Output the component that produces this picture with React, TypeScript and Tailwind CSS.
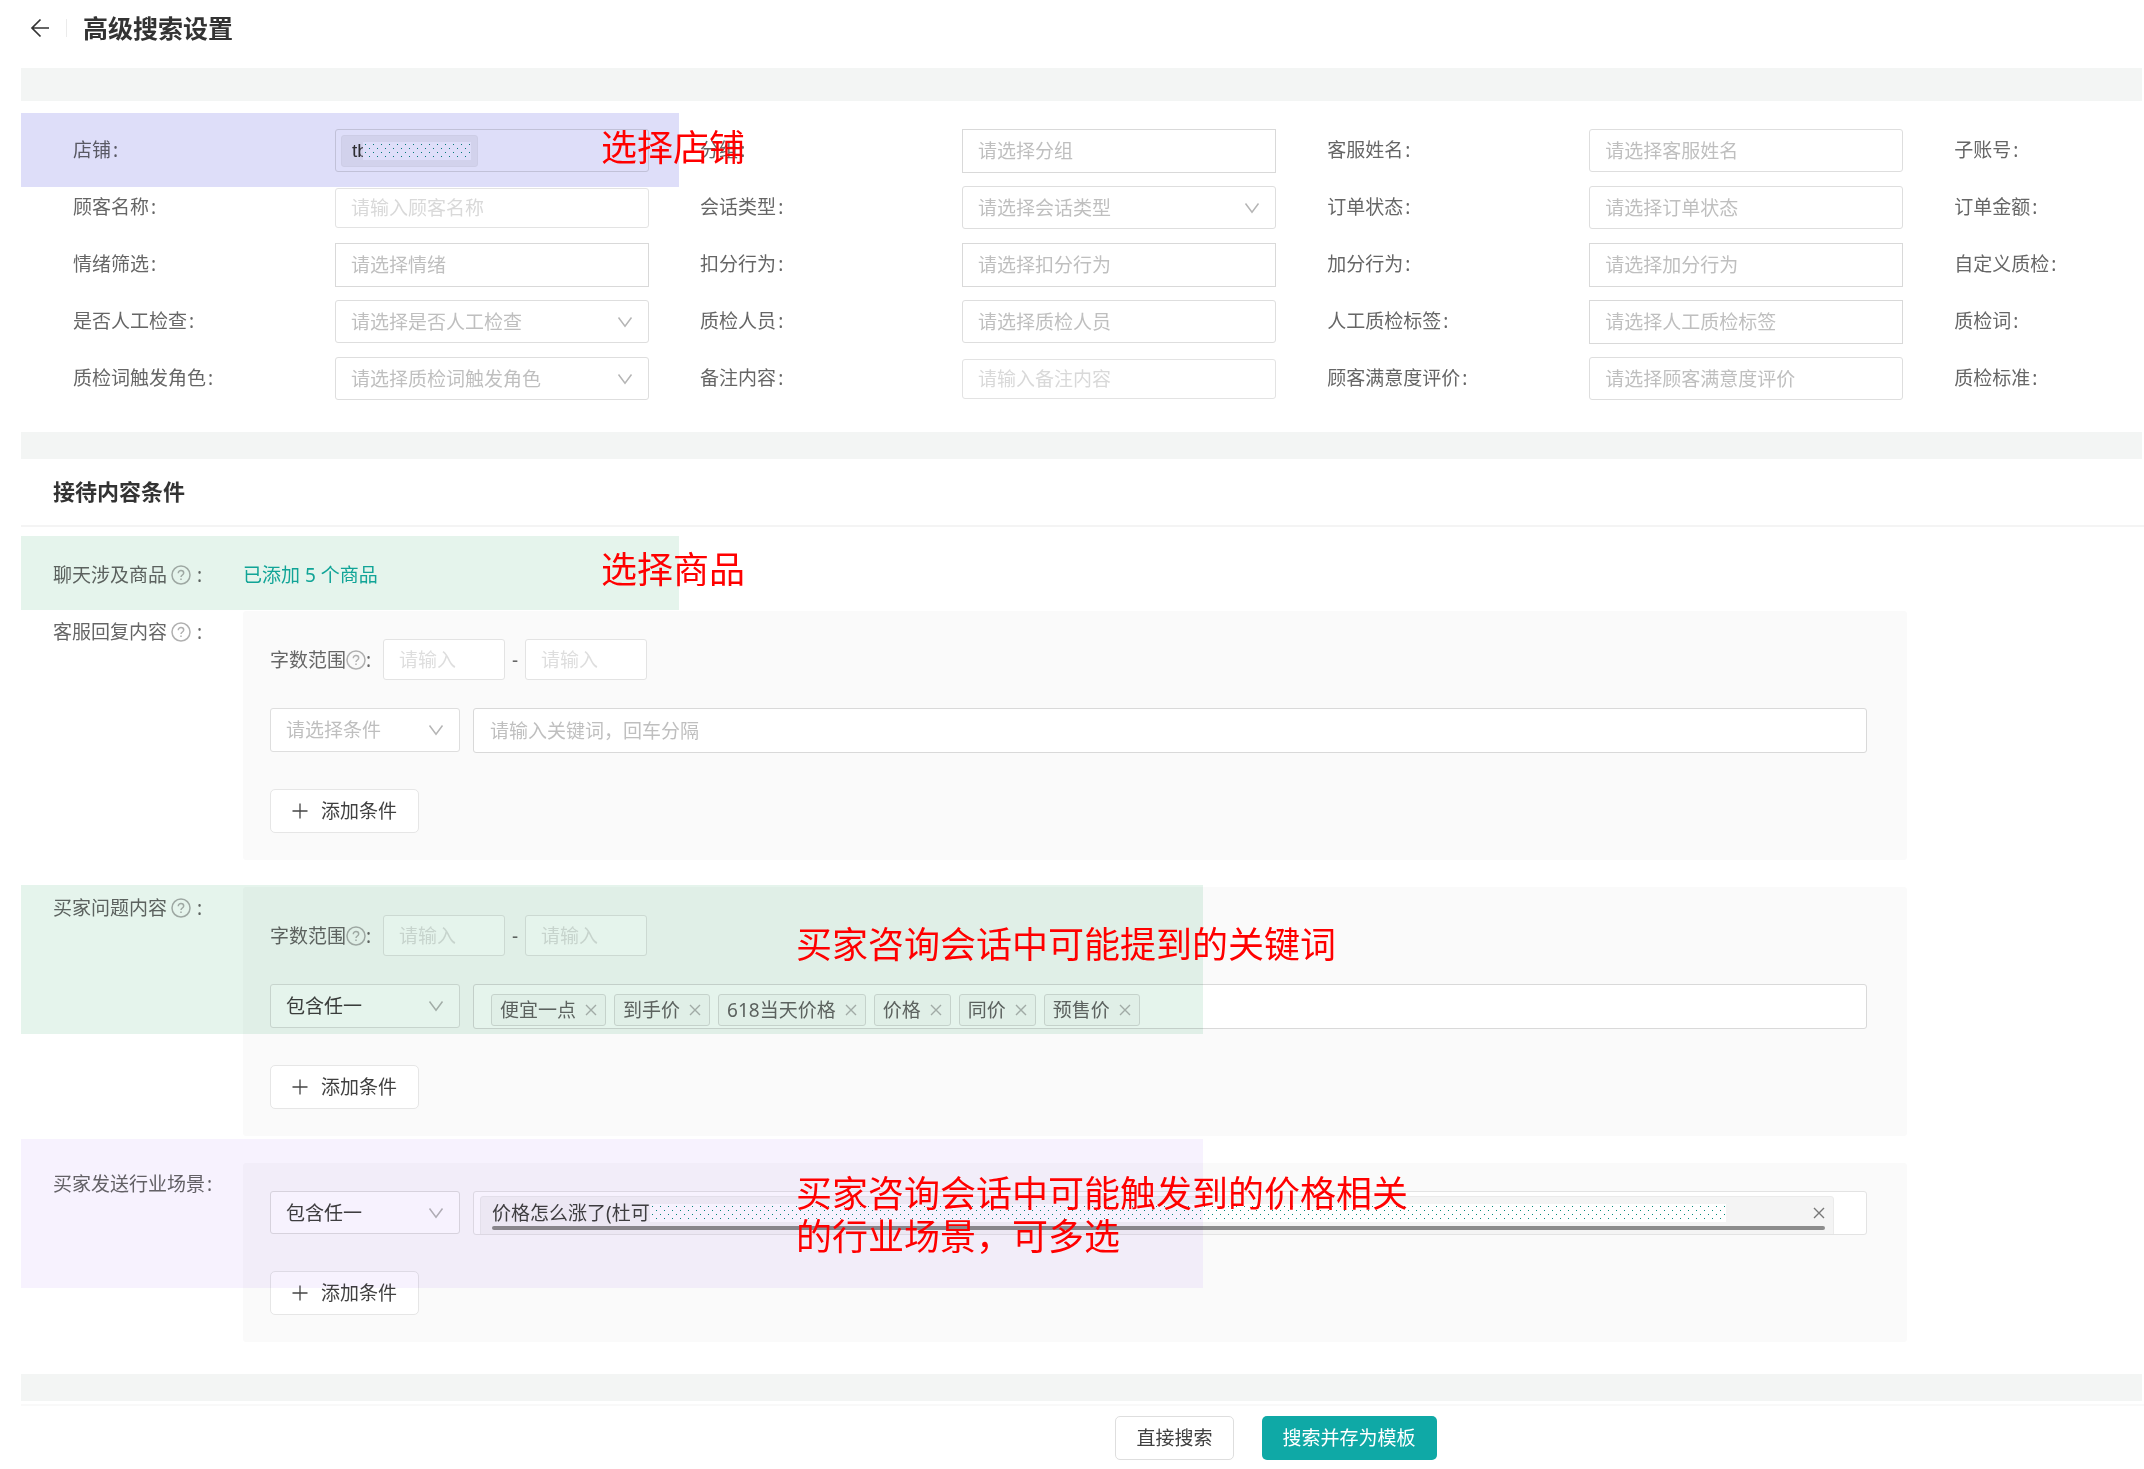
import { useId, type ReactNode } from 'react';
import clsx from 'clsx';

type FieldKind = 'select' | 'tags' | 'picker' | 'input';

interface Field {
  label: string;
  placeholder?: string;
  kind?: FieldKind;
}

const FIELDS: Field[] = [
  { label: '店铺' },
  { label: '分组', placeholder: '请选择分组', kind: 'tags' },
  { label: '客服姓名', placeholder: '请选择客服姓名', kind: 'picker' },
  { label: '子账号', placeholder: '请选择子账号', kind: 'picker' },
  { label: '顾客名称', placeholder: '请输入顾客名称', kind: 'input' },
  { label: '会话类型', placeholder: '请选择会话类型', kind: 'select' },
  { label: '订单状态', placeholder: '请选择订单状态', kind: 'picker' },
  { label: '订单金额', placeholder: '请输入', kind: 'input' },
  { label: '情绪筛选', placeholder: '请选择情绪', kind: 'tags' },
  { label: '扣分行为', placeholder: '请选择扣分行为', kind: 'tags' },
  { label: '加分行为', placeholder: '请选择加分行为', kind: 'tags' },
  { label: '自定义质检', placeholder: '请选择自定义质检', kind: 'tags' },
  { label: '是否人工检查', placeholder: '请选择是否人工检查', kind: 'select' },
  { label: '质检人员', placeholder: '请选择质检人员', kind: 'picker' },
  { label: '人工质检标签', placeholder: '请选择人工质检标签', kind: 'tags' },
  { label: '质检词', placeholder: '请选择质检词', kind: 'picker' },
  { label: '质检词触发角色', placeholder: '请选择质检词触发角色', kind: 'select' },
  { label: '备注内容', placeholder: '请输入备注内容', kind: 'input' },
  { label: '顾客满意度评价', placeholder: '请选择顾客满意度评价', kind: 'picker' },
  { label: '质检标准', placeholder: '请选择质检标准', kind: 'picker' },
];

const KEYWORDS = ['便宜一点', '到手价', '618当天价格', '价格', '同价', '预售价'];

function ArrowLeft() {
  return (
    <svg className="h-5 w-5" viewBox="0 0 20 20" fill="none" stroke="#333" strokeWidth="1.7">
      <path d="M10.5 1.5 2 10l8.500 8.500M2 10h17" />
    </svg>
  );
}

function Chevron() {
  return (
    <svg
      className="pointer-events-none absolute top-1/2 right-4 h-4 w-4 -translate-y-1/2"
      viewBox="0 0 16 16"
      fill="none"
      stroke="#b5b5b5"
      strokeWidth="1.5"
    >
      <path d="m1.500 3.500 6.500 8.700 6.500-8.700" />
    </svg>
  );
}

function Cross({ className }: { className?: string }) {
  return (
    <svg className={clsx('h-3 w-3 shrink-0', className)} viewBox="0 0 12 12" fill="none" stroke="currentColor" strokeWidth="1.4">
      <path d="m1 1 10 10M11 1 1 11" />
    </svg>
  );
}

function Plus() {
  return (
    <svg className="h-4 w-4 shrink-0" viewBox="0 0 16 16" fill="none" stroke="#444" strokeWidth="1.3">
      <path d="M8 .5v15M.5 8h15" />
    </svg>
  );
}

function Help() {
  return (
    <svg className="h-5 w-5 shrink-0" viewBox="0 0 20 20" fill="none" stroke="#b0b0b0" strokeWidth="1.5">
      <circle cx="10" cy="10" r="9" />
      <path d="M7.300 8.200c0-1.600 1.200-2.600 2.700-2.600s2.700 1 2.700 2.400c0 1.900-2.700 2.100-2.700 4.100" />
      <path d="M10 13.600v1.500" />
    </svg>
  );
}

// Dotted cover over private text
function Mosaic({ className }: { className?: string }) {
  const id = useId();
  return (
    <svg className={clsx('h-[18px] bg-white', className)} shapeRendering="crispEdges">
      <pattern id={id} width="8" height="8" patternUnits="userSpaceOnUse">
        <rect x="2" y="2" width="1" height="1" fill="#06897c" />
        <rect x="6" y="6" width="1" height="1" fill="#06897c" />
      </pattern>
      <rect width="100%" height="100%" fill={`url(#${id})`} />
    </svg>
  );
}

function Highlight({ className }: { className: string }) {
  return <div className={clsx('pointer-events-none absolute left-[21px] z-10 mix-blend-multiply', className)} />;
}

function Note({ className, children }: { className: string; children: ReactNode }) {
  return (
    <p className={clsx('pointer-events-none absolute z-20 text-[36px] leading-[43px] whitespace-nowrap text-[#ff0000]', className)}>
      {children}
    </p>
  );
}

function Band({ className }: { className: string }) {
  return <div className={clsx('mr-0.5 ml-[21px] bg-[#f3f5f4]', className)} />;
}

function SelectBox({ id, label, value, muted, className }: { id?: string; label?: string; value: string; muted?: boolean; className?: string }) {
  return (
    <div className={clsx('relative', className)}>
      <select
        id={id}
        aria-label={label}
        className={clsx(
          'h-full w-full appearance-none rounded-[3px] border border-[#dedede] bg-white pr-10 pl-[15px]',
          muted ? 'text-[#bfbfbf]' : 'text-[#404040]',
        )}
      >
        <option>{value}</option>
      </select>
      <Chevron />
    </div>
  );
}

function FieldControl({ id, field }: { id: string; field: Field }) {
  if (field.kind === 'select') {
    return <SelectBox id={id} value={field.placeholder ?? ''} muted className="h-[43px] w-full" />;
  }
  if (!field.kind) {
    return (
      <div className="flex h-[43px] w-full items-center rounded-[3px] border border-[#dedede] bg-white pl-[5px]">
        <div className="flex h-8 w-[137px] items-center rounded-[3px] border border-[#ececec] bg-[#f2f2f2] pl-2.5">
          <span className="w-[11px] shrink-0 overflow-hidden font-['Liberation_Sans',sans-serif] text-[#333]">tb</span>
          <Mosaic className="w-[108px]" />
        </div>
      </div>
    );
  }
  return (
    <input
      id={id}
      placeholder={field.placeholder}
      className={clsx(
        'w-full border bg-white px-[15px]',
        field.kind === 'tags' && 'h-11 border-[#d9d9d9] placeholder:text-[#bfbfbf]',
        field.kind === 'picker' && 'h-[43px] rounded-[3px] border-[#dedede] placeholder:text-[#bfbfbf]',
        field.kind === 'input' && 'h-10 rounded-[3px] border-[#e3e3e3] placeholder:text-[#d9d9d9]',
      )}
    />
  );
}

function AddButton() {
  return (
    <button className="flex h-11 items-center gap-[13px] rounded-[5px] border border-[#e6e6e6] bg-white px-[21px] text-[#404040]">
      <Plus />
      添加条件
    </button>
  );
}

function WordRange() {
  return (
    <div className="mb-7 flex h-[41px] items-center">
      <span>字数范围</span>
      <Help />
      <span>:</span>
      <input
        aria-label="最少字数"
        placeholder="请输入"
        className="ml-3 h-full w-[122px] rounded-[3px] border border-[#e3e3e3] bg-white px-[15px] placeholder:text-[#dedede]"
      />
      <span className="w-5 text-center">-</span>
      <input
        aria-label="最多字数"
        placeholder="请输入"
        className="h-full w-[122px] rounded-[3px] border border-[#e3e3e3] bg-white px-[15px] placeholder:text-[#dedede]"
      />
    </div>
  );
}

function Condition({ label, help, className, children }: { label: string; help?: boolean; className?: string; children: ReactNode }) {
  return (
    <div className={clsx('relative flex pl-[53px]', className)}>
      <div className="flex h-[42px] w-[190px] shrink-0 items-center">
        <span>{label}</span>
        {help && (
          <span className="mr-1.5 ml-1">
            <Help />
          </span>
        )}
        <span className={clsx(!help && 'ml-0.5')}>:</span>
      </div>
      {children}
    </div>
  );
}

function Panel({ children }: { children: ReactNode }) {
  return <div className="mr-[237px] min-w-0 flex-1 rounded-[3px] bg-[#fafafa] pt-7 pr-10 pb-[27px] pl-[27px]">{children}</div>;
}

export default function App() {
  return (
    <main className="w-full overflow-hidden bg-white pb-[9px] font-['Noto_Sans','Noto_Sans_CJK_SC',sans-serif] text-[19px] leading-7 text-[#666]">
      <header className="flex h-[68px] items-center pb-3 pl-[30px]">
        <button aria-label="返回">
          <ArrowLeft />
        </button>
        <div className="mx-4 h-[18px] w-px bg-[#ebebeb]" />
        <h1 className="text-[25px] font-bold text-[#333]">高级搜索设置</h1>
      </header>
      <Band className="h-[33px]" />

      <section className="relative pt-[21px] pb-[25px]">
        <Highlight className="top-3 h-[74px] w-[658px] bg-[#dedef9]" />
        <Note className="top-[25px] left-[601px]">选择店铺</Note>
        {/* Four columns, the last one runs past the window */}
        <div className="ml-[73px] grid w-[117%] grid-cols-4">
          {FIELDS.map((field) => {
            const id = `field-${field.label}`;
            return (
              <div key={field.label} className="flex h-[57px] items-center pr-[51px]">
                <label htmlFor={id} className="w-[262px] shrink-0 pb-0.5">
                  {field.label}
                  <span className="ml-0.5">:</span>
                </label>
                <FieldControl id={id} field={field} />
              </div>
            );
          })}
        </div>
      </section>
      <Band className="h-[27px]" />

      <section>
        <h2 className="ml-[21px] flex h-[68px] items-center border-b-2 border-[#f4f4f4] pb-0.5 pl-8 text-[22px] font-bold text-[#333]">
          接待内容条件
        </h2>

        <Condition label="聊天涉及商品" help className="mt-3 mb-px h-[71px] items-center">
          <Highlight className="-top-[3px] h-[74px] w-[658px] bg-[#e5f4ec]" />
          <Note className="top-[9px] left-[601px]">选择商品</Note>
          <a href="#goods" className="text-[#12aca3]">
            已添加 5 个商品
          </a>
        </Condition>

        <Condition label="客服回复内容" help>
          <Panel>
            <WordRange />
            <div className="mb-9 flex gap-[13px]">
              <SelectBox label="回复条件" value="请选择条件" muted className="h-11 w-[190px]" />
              <input
                aria-label="关键词"
                placeholder="请输入关键词，回车分隔"
                className="h-[45px] min-w-0 flex-1 rounded-[3px] border border-[#d9d9d9] bg-white px-4 placeholder:text-[#bfbfbf]"
              />
            </div>
            <AddButton />
          </Panel>
        </Condition>

        <Condition label="买家问题内容" help className="mt-[27px]">
          <Highlight className="-top-0.5 h-[149px] w-[1182px] bg-[#e5f4ec]" />
          <Note className="top-9 left-[796px]">买家咨询会话中可能提到的关键词</Note>
          <Panel>
            <WordRange />
            <div className="mb-9 flex gap-[13px]">
              <SelectBox label="问题条件" value="包含任一" className="h-11 w-[190px]" />
              <div className="flex h-[45px] min-w-0 flex-1 gap-2 rounded-[3px] border border-[#d9d9d9] bg-white pt-[9px] pl-[17px]">
                {KEYWORDS.map((word) => (
                  <span key={word} className="flex h-8 items-center gap-[9px] rounded-[3px] border border-[#dcdcdc] bg-[#fafafa] px-2">
                    {word}
                    <button aria-label={`移除${word}`}>
                      <Cross className="text-[#b3b3b3]" />
                    </button>
                  </span>
                ))}
              </div>
            </div>
            <AddButton />
          </Panel>
        </Condition>

        <Condition label="买家发送行业场景" className="mt-[27px]">
          <Highlight className="-top-6 h-[149px] w-[1182px] bg-[#f7f2fe]" />
          <Note className="top-[9px] left-[796px]">
            买家咨询会话中可能触发到的价格相关
            <br />
            的行业场景，可多选
          </Note>
          <Panel>
            <div className="mb-9 flex gap-[13px]">
              <SelectBox label="场景条件" value="包含任一" className="h-[43px] w-[190px]" />
              <div className="h-11 min-w-0 flex-1 overflow-hidden rounded-[3px] border border-[#e3e3e3] bg-white pt-1 pr-8 pl-1.5">
                <div className="h-11 rounded-[3px] border border-[#ebebeb] bg-[#f4f4f4] pt-[7px] pr-2 pl-[11px]">
                  <div className="flex h-[18px] items-center text-[#404040]">
                    <span className="shrink-0">价格怎么涨了(杜可</span>
                    <Mosaic className="min-w-0 flex-1" />
                    <button aria-label="移除场景" className="ml-[87px]">
                      <Cross className="text-[#777]" />
                    </button>
                  </div>
                  <div className="mt-1 h-1 rounded-[2px] bg-[#8c8c8c]" />
                </div>
              </div>
            </div>
            <AddButton />
          </Panel>
        </Condition>
      </section>

      <Band className="mt-8 h-[27px]" />
      <footer className="mt-[3px] ml-[21px] flex justify-center gap-7 border-t-2 border-[#f9f9f9] pt-2.5 pl-[387px]">
        <button className="h-11 rounded-[5px] border border-[#dedede] bg-white px-5 text-[#404040]">直接搜索</button>
        <button className="h-11 rounded-[5px] bg-[#0fa9a6] px-[21px] text-white">搜索并存为模板</button>
      </footer>
    </main>
  );
}
